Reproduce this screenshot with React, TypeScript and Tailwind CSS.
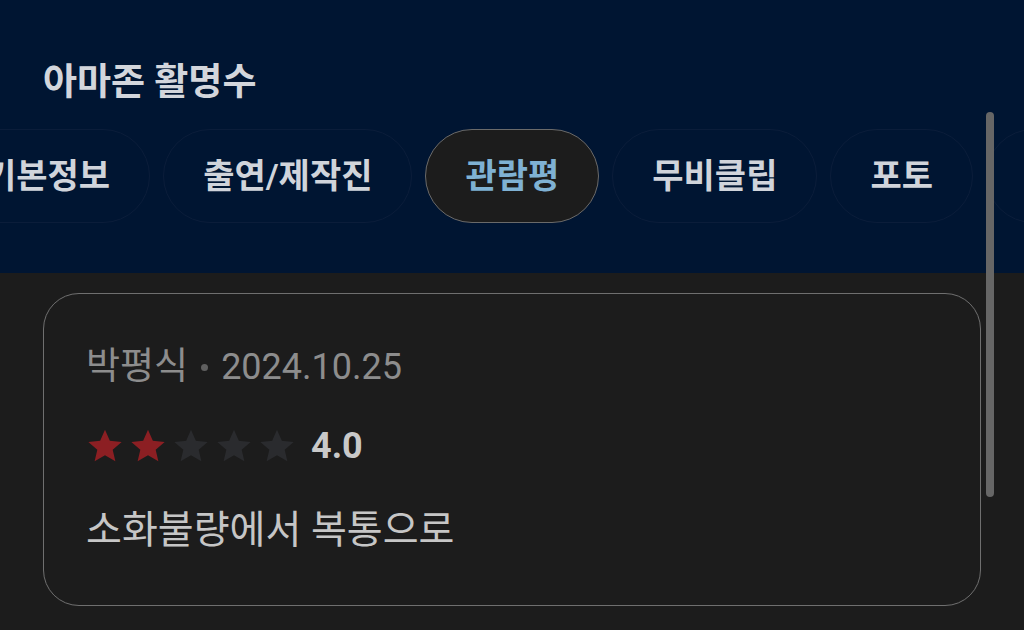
const tabs = ['기본정보', '출연/제작진', '관람평', '무비클립', '포토', '예고편'];

function Star({ filled }: { filled: boolean }) {
  return (
    <svg viewBox="0 0 24 24" className="h-[38px] w-[38px] shrink-0">
      <path
        d="M12 1.8l3.05 6.9 7.45.7-5.65 4.95 1.7 7.35L12 17.85 5.45 21.7l1.7-7.35L1.5 9.4l7.45-.7z"
        fill={filled ? '#8c1f23' : '#2a2b2e'}
      />
    </svg>
  );
}

export default function App() {
  const rating = 2;
  return (
    <div
      className="relative h-[630px] w-[1024px] overflow-hidden bg-[#1c1c1c]"
      style={{ fontFamily: "Roboto, 'Noto Sans CJK KR', sans-serif" }}
    >
      <header className="overflow-hidden bg-[#001532] pb-[50px] pt-[59px]">
        <h1 className="pl-[43px] text-[37px] font-bold leading-[48px] text-[#d3d6dc]">아마존 활명수</h1>
        <nav className="ml-[-55px] mt-[22px] flex gap-[13px]">
          {tabs.map((t) => {
            const active = t === '관람평';
            return (
              <button
                key={t}
                type="button"
                className={
                  active
                    ? 'flex h-[94px] shrink-0 items-center rounded-full border border-[#6a6a6a] bg-[#1c1c1c] px-[39px] text-[34px] font-semibold text-[#7fb1d3]'
                    : 'flex h-[94px] shrink-0 items-center rounded-full border border-[#0b1d3a] px-[39px] text-[34px] font-semibold text-[#d0d4db]'
                }
              >
                {t}
              </button>
            );
          })}
        </nav>
      </header>

      <section className="px-[43px] pt-[20px]">
        <div className="h-[313px] rounded-[36px] border border-[#6f6f6f] px-[42px] pt-[49px]">
          <div className="flex items-center gap-[13px] leading-[48px] text-[#8d8d8d]">
            <span className="text-[37px]">박평식</span>
            <span className="h-[7px] w-[7px] rounded-full bg-[#5f5f5f]" />
            <span className="text-[36px]">2024.10.25</span>
          </div>
          <div className="mt-[31px] flex h-[48px] items-center">
            <div className="flex gap-[5px]">
              {[0, 1, 2, 3, 4].map((i) => (
                <Star key={i} filled={i < rating} />
              ))}
            </div>
            <span className="ml-[15px] text-[36px] font-bold text-[#c9c9c9]">4.0</span>
          </div>
          <p className="mt-[33px] text-[39px] leading-[54px] text-[#c6c6c6]">소화불량에서 복통으로</p>
        </div>
      </section>

      {/* overlay scrollbar */}
      <div className="absolute left-[986px] top-[112px] h-[385px] w-[8px] rounded-full bg-[#666666]" />
    </div>
  );
}
